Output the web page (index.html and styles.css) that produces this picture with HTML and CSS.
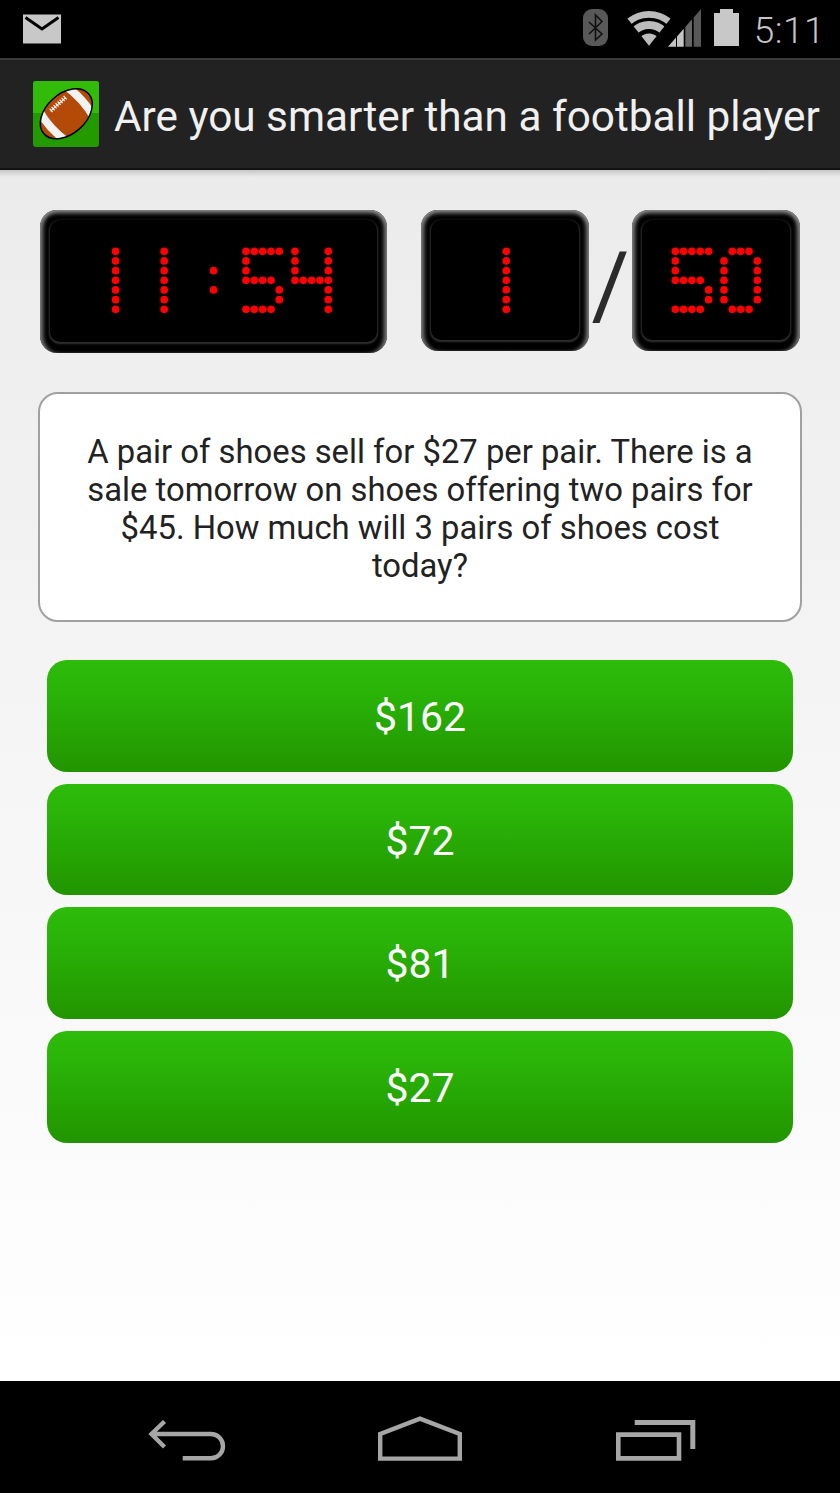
FILE: index.html
```html
<!DOCTYPE html>
<html lang="en">
<head>
<meta charset="utf-8">
<title>Are you smarter than a football player</title>
<link rel="stylesheet" href="styles.css">
</head>
<body>
<svg class="defs" width="0" height="0" aria-hidden="true">
  <defs>
    <g id="d1"><circle cx="16.6" cy="0"/><circle cx="16.6" cy="9.67"/><circle cx="16.6" cy="19.33"/><circle cx="16.6" cy="29"/><circle cx="16.6" cy="38.67"/><circle cx="16.6" cy="48.33"/><circle cx="16.6" cy="58"/></g>
    <g id="dc"><circle cx="16.6" cy="19.33"/><circle cx="16.6" cy="38.67"/></g>
    <g id="d5"><circle cx="0" cy="0"/><circle cx="8.3" cy="0"/><circle cx="16.6" cy="0"/><circle cx="25" cy="0"/><circle cx="33.3" cy="0"/><circle cx="0" cy="9.67"/><circle cx="0" cy="19.33"/><circle cx="0" cy="29"/><circle cx="8.3" cy="29"/><circle cx="16.6" cy="29"/><circle cx="25" cy="29"/><circle cx="33.3" cy="38.67"/><circle cx="33.3" cy="48.33"/><circle cx="0" cy="58"/><circle cx="8.3" cy="58"/><circle cx="16.6" cy="58"/><circle cx="25" cy="58"/></g>
    <g id="d4"><circle cx="0" cy="0"/><circle cx="33.3" cy="0"/><circle cx="0" cy="9.67"/><circle cx="33.3" cy="9.67"/><circle cx="0" cy="19.33"/><circle cx="33.3" cy="19.33"/><circle cx="0" cy="29"/><circle cx="8.3" cy="29"/><circle cx="16.6" cy="29"/><circle cx="25" cy="29"/><circle cx="33.3" cy="29"/><circle cx="33.3" cy="38.67"/><circle cx="33.3" cy="48.33"/><circle cx="33.3" cy="58"/></g>
    <g id="d0"><circle cx="8.3" cy="0"/><circle cx="16.6" cy="0"/><circle cx="25" cy="0"/><circle cx="0" cy="9.67"/><circle cx="33.3" cy="9.67"/><circle cx="0" cy="19.33"/><circle cx="33.3" cy="19.33"/><circle cx="0" cy="29"/><circle cx="33.3" cy="29"/><circle cx="0" cy="38.67"/><circle cx="33.3" cy="38.67"/><circle cx="0" cy="48.33"/><circle cx="33.3" cy="48.33"/><circle cx="8.3" cy="58"/><circle cx="16.6" cy="58"/><circle cx="25" cy="58"/></g>
    <clipPath id="ball"><ellipse cx="0" cy="0" rx="30" ry="20"/></clipPath>
  </defs>
</svg>

<header class="status-bar">
  <svg class="ic-mail" width="38" height="30" viewBox="0 0 38 30" aria-hidden="true">
    <rect width="38" height="29" y="0.5" fill="#c8c8c8"/>
    <path d="M2.5 3.5 19 15 35.5 3.500" fill="none" stroke="#000" stroke-width="3"/>
  </svg>
  <div class="status-right">
    <svg class="ic-bt" width="25" height="37" viewBox="0 0 25 37" aria-hidden="true">
      <rect width="25" height="37" rx="9" fill="#585858"/>
      <path d="M6 13 19 25 12.500 31V6L19 12.500 6 25" fill="none" stroke="#111" stroke-width="1.600"/>
    </svg>
    <svg class="ic-wifi" width="47" height="37" viewBox="0 0 47 37" aria-hidden="true">
      <path d="M1.400 9.500A34.700 34.700 0 0 1 44.600 9.500L23 36.700Z" fill="#bcbcbc"/>
      <path d="M4.330 18.030A26.400 26.400 0 0 1 41.670 18.030" fill="none" stroke="#000" stroke-width="3.300"/>
      <path d="M12.750 26.450A14.500 14.500 0 0 1 33.250 26.450" fill="none" stroke="#000" stroke-width="4.500"/>
    </svg>
    <svg class="ic-signal" width="33" height="38" viewBox="0 0 33 38" aria-hidden="true">
      <path d="M0 37.700 8 28.600V37.700Z" fill="#c4c4c4"/>
      <path d="M9 27.400 15.700 19.800V37.700H9Z" fill="#c4c4c4"/>
      <path d="M17.300 18 24 10.300V37.700H17.300Z" fill="#666"/>
      <path d="M25.700 8.400 33 0V37.700H25.700Z" fill="#585858"/>
    </svg>
    <svg class="ic-batt" width="25" height="37" viewBox="0 0 25 37" aria-hidden="true">
      <path d="M6 0H19V4H25V37H0V4H6Z" fill="#c8c8c8"/>
    </svg>
    <span class="clock">5:11</span>
  </div>
</header>

<header class="action-bar">
  <svg class="app-icon" width="66" height="66" viewBox="0 0 66 66" aria-hidden="true">
    <rect width="66" height="66" rx="3" fill="#229a00"/>
    <path d="M0 32V3a3 3 0 0 1 3-3H63a3 3 0 0 1 3 3V32Z" fill="#33bb09"/>
    <g transform="translate(33.300 32.800) rotate(-42)">
      <ellipse rx="30" ry="20" fill="#b34a08"/>
      <g clip-path="url(#ball)" fill="none" stroke="#f2f2f2" stroke-width="8">
        <path d="M18 -22Q23 0 18 22"/>
        <path d="M-18 -22Q-23 0 -18 22"/>
      </g>
      <ellipse rx="30" ry="20" fill="none" stroke="#000" stroke-width="1.500"/>
      <path d="M-10 -12.500H10" stroke="#f2f2f2" stroke-width="1"/>
      <path d="M-9 -15V-10.500M-6.300 -15V-10.500M-3.600 -15V-10.500M-0.900 -15V-10.500M1.800 -15V-10.500M4.500 -15V-10.500M7.200 -15V-10.500M9.900 -15V-10.500" stroke="#f2f2f2" stroke-width="1.300"/>
    </g>
  </svg>
  <h1 class="app-title">Are you smarter than a football player</h1>
</header>

<main class="content">
  <section class="scores">
    <div class="board board-time">
      <div class="screen">
        <svg class="dots" width="347" height="143" viewBox="0 0 347 143" role="img" aria-label="11:54">
          <g fill="#f00" transform="translate(0 41.300)">
            <use href="#d1" x="59"/><use href="#d1" x="107.600"/><use href="#dc" x="157"/><use href="#d5" x="206"/><use href="#d4" x="255"/>
          </g>
        </svg>
      </div>
    </div>
    <div class="board board-count">
      <div class="screen">
        <svg class="dots" width="168" height="141" viewBox="0 0 168 141" role="img" aria-label="1">
          <g fill="#f00" transform="translate(0 41.300)"><use href="#d1" x="68.700"/></g>
        </svg>
      </div>
    </div>
    <span class="slash">/</span>
    <div class="board board-count">
      <div class="screen">
        <svg class="dots" width="168" height="141" viewBox="0 0 168 141" role="img" aria-label="50">
          <g fill="#f00" transform="translate(0 41.300)"><use href="#d5" x="43.300"/><use href="#d0" x="92"/></g>
        </svg>
      </div>
    </div>
  </section>

  <section class="question">
    <p class="question-text">A pair of shoes sell for $27 per pair. There is a sale tomorrow on shoes offering two pairs for $45. How much will 3 pairs of shoes cost today?</p>
  </section>

  <section class="answers">
    <button class="answer">$162</button>
    <button class="answer">$72</button>
    <button class="answer">$81</button>
    <button class="answer">$27</button>
  </section>
</main>

<nav class="nav-bar">
  <svg class="nav-back" width="78" height="41" viewBox="0 0 78 41" aria-hidden="true">
    <path d="M16.500 1.500 3.500 14 16.500 27M3.500 14H62.850A12.150 12.150 0 0 1 62.850 38.300H34.700" fill="none" stroke="#a6a6a6" stroke-width="4.400"/>
  </svg>
  <svg class="nav-home" width="84" height="45" viewBox="0 0 84 45" aria-hidden="true">
    <path d="M2.200 42.600V18L42 2.600 81.800 18V42.600Z" fill="none" stroke="#a6a6a6" stroke-width="4.400"/>
  </svg>
  <svg class="nav-recent" width="80" height="41" viewBox="0 0 80 41" aria-hidden="true">
    <path d="M2.300 14.600H63V38.400H2.300Z" fill="none" stroke="#a6a6a6" stroke-width="4.600"/>
    <path d="M18.700 2.500H76.800V29" fill="none" stroke="#a6a6a6" stroke-width="5"/>
  </svg>
</nav>
</body>
</html>
```

FILE: styles.css
```css
* { box-sizing: border-box; }
html, body { margin: 0; padding: 0; }
body {
  width: 840px;
  height: 1493px;
  display: flex;
  flex-direction: column;
  overflow: hidden;
  font-family: Roboto, "Liberation Sans", sans-serif;
  background: #fff;
}
.defs { position: absolute; }
.defs circle { r: 3.85px; }

.status-bar {
  height: 58px;
  flex: none;
  background: #000;
  display: flex;
  justify-content: space-between;
  align-items: flex-start;
  padding: 9px 15px 0 23px;
}
.ic-mail { display: block; margin-top: 5px; }
.status-right { display: flex; align-items: flex-start; }
.ic-bt { margin-right: 18px; }
.ic-wifi { margin-right: -5px; }
.ic-signal { margin-right: 13px; }
.ic-batt { margin-right: 15px; }
.clock {
  font-size: 37px;
  line-height: 37px;
  margin-top: 3px;
  color: #c4c4c4;
  font-weight: 300;
  letter-spacing: 0.5px;
}

.action-bar {
  height: 112px;
  flex: none;
  display: flex;
  align-items: center;
  padding-left: 33px;
  background: #222;
  border-top: 2px solid #3a3a3a;
  border-bottom: 2px solid #111;
}
.app-icon { flex: none; margin-right: 15px; }
.app-title {
  margin: 4px 0 0;
  font-size: 42.3px;
  font-weight: 400;
  color: #f0f0f0;
  white-space: nowrap;
}

.content {
  flex: 1;
  padding: 40px 38px 0;
  background:
    linear-gradient(rgba(0, 0, 0, 0.16), rgba(0, 0, 0, 0) 7px),
    linear-gradient(#ebebeb 0, #f3f3f3 35%, #fafafa 75%, #fff 100%);
}
.scores {
  display: flex;
  align-items: flex-start;
  padding: 0 2px;
}
.board {
  border-radius: 17px;
  padding: 10px 10px 11px;
  background: #000;
  box-shadow: inset 0 4px 4px -1px #8a8a8a, inset 5px 0 4px -2px #7a7a7a, inset -5px 0 4px -2px #7a7a7a;
  flex: none;
}
.board-time { width: 347px; height: 143px; margin-right: 34px; }
.board-count { width: 168px; height: 141px; }
.screen {
  position: relative;
  width: 100%;
  height: 100%;
  border-radius: 10px;
  background: #000;
  box-shadow: 0 1px 2px 1px #303030;
}
.dots { position: absolute; left: -10px; top: -10px; display: block; }
.slash {
  width: 43px;
  height: 141px;
  flex: none;
  text-align: center;
  font-size: 92px;
  line-height: 151px;
  color: #2b2b2b;
}

.question {
  margin-top: 39px;
  height: 230px;
  background: #fff;
  border: 2px solid #a0a0a0;
  border-radius: 20px;
  padding: 39px 44px 0;
}
.question-text {
  margin: 0;
  font-size: 32.800px;
  line-height: 38px;
  text-align: center;
  color: #222;
}

.answers {
  margin-top: 38px;
  padding: 0 9px;
  display: flex;
  flex-direction: column;
  gap: 12px;
}
.answer {
  height: 111.700px;
  border: 0;
  border-radius: 20px;
  background: linear-gradient(#2ebb0a 0, #2ab508 25%, #229500 100%);
  color: #fff;
  font-family: inherit;
  font-size: 41px;
  padding: 2px 0 0;
}

.nav-bar {
  height: 112px;
  flex: none;
  background: #000;
  display: flex;
  align-items: flex-end;
  padding: 0 0 32px 148px;
}
.nav-home { margin-left: 152px; }
.nav-recent { margin-left: 154px; }
```
